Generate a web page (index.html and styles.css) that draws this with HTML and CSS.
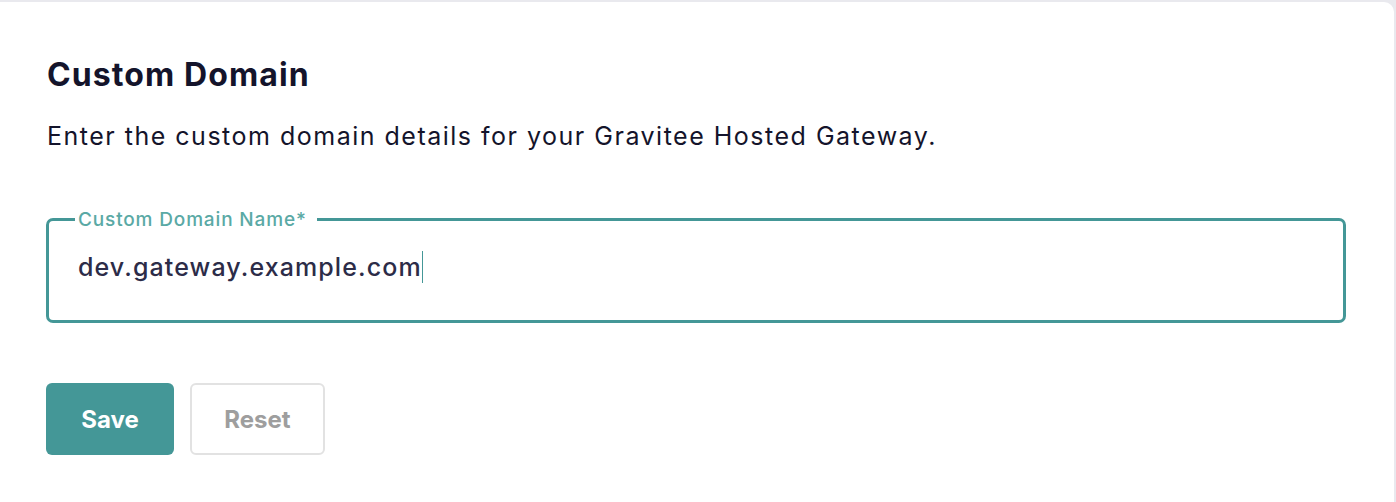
FILE: index.html
```html
<!DOCTYPE html>
<html>
<head>
<meta charset="utf-8">
<link rel="stylesheet" href="styles.css">
</head>
<body>
<div class="card">
  <h1 class="title">Custom Domain</h1>
  <p class="desc">Enter the custom domain details for your Gravitee Hosted Gateway.</p>
  <fieldset class="field">
    <legend class="label">Custom Domain Name*</legend>
    <div class="value">dev.gateway.example.com<span class="caret"></span></div>
  </fieldset>
  <div class="actions">
    <button class="btn btn-primary">Save</button>
    <button class="btn btn-secondary">Reset</button>
  </div>
</div>
</body>
</html>
```

FILE: styles.css
```css
html, body {
  margin: 0;
  padding: 0;
  background: #e9e9ee;
  font-family: Inter, "Noto Sans", sans-serif;
}
body {
  padding-top: 2px;
  width: 1396px;
  height: 500px;
  overflow: hidden;
}
.card {
  box-sizing: border-box;
  width: 1394px;
  height: 520px;
  background: #fff;
  border-radius: 0 10px 0 0;
  padding: 55px 48px 0 46px;
}
.title {
  margin: 0 0 0 1px;
  font-size: 32px;
  font-weight: 700;
  color: #14142b;
  letter-spacing: 1.1px;
  line-height: 36px;
}
.desc {
  margin: 28px 0 0 1px;
  font-size: 25px;
  color: #14142b;
  letter-spacing: 1.5px;
  line-height: 30px;
}
.field {
  margin: 57px 0 0 0;
  width: 1300px;
  box-sizing: border-box;
  height: 115px;
  border: 3px solid #449797;
  border-radius: 7px;
  padding: 0 29px;
}
.label {
  padding: 0 10px 0 3px;
  margin-left: -3px;
  font-size: 19px;
  color: #5aa9a5;
  letter-spacing: 0.85px;
  font-weight: 500;
}
.value {
  margin-top: 20px;
  font-size: 25px;
  color: #2c2c48;
  letter-spacing: 1.1px;
  line-height: 32px;
  display: flex;
  align-items: center;
  font-weight: 500;
}
.caret {
  display: inline-block;
  width: 1.5px;
  height: 32px;
  background: #449797;
  margin-left: 0;
}
.actions {
  display: flex;
  gap: 16px;
  margin-top: 60px;
}
.btn {
  font-family: Inter, "Noto Sans", sans-serif;
  font-size: 24px;
  font-weight: 700;
  height: 72px;
  border-radius: 6px;
  box-sizing: border-box;
  cursor: pointer;
}
.btn-primary {
  width: 128px;
  background: #449797;
  border: none;
  color: #fff;
}
.btn-secondary {
  width: 135px;
  background: #fff;
  border: 2px solid #e2e2e2;
  color: #9e9e9e;
}
```
